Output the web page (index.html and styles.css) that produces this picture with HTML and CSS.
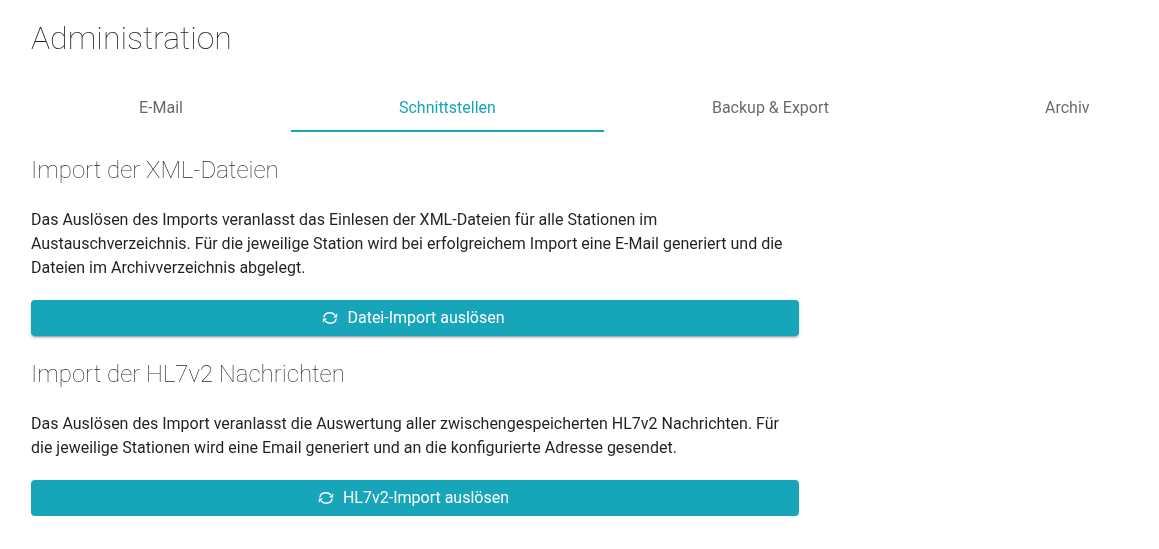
FILE: index.html
```html
<!DOCTYPE html>
<html lang="de">
<head>
    <meta charset="UTF-8">
    <title>Administration</title>
    <link rel="stylesheet" href="styles.css">
</head>
<body>

<div class="container">
    <h1 class="page-title">Administration</h1>

    <div class="tabs">
        <div class="tab">E-Mail</div>
        <div class="tab active">Schnittstellen</div>
        <div class="tab">Backup &amp; Export</div>
        <div class="tab">Archiv</div>
    </div>

    <div class="panel">
        <h2 class="section-title">Import der XML-Dateien</h2>
        <p class="section-text">Das Auslösen des Imports veranlasst das Einlesen der XML-Dateien für alle Stationen im Austauschverzeichnis. Für die jeweilige Station wird bei erfolgreichem Import eine E-Mail generiert und die Dateien im Archivverzeichnis abgelegt.</p>
        <button class="action-button raised">
            <svg class="sync-icon" viewBox="0 0 16 16"><path class="sync-arc" d="M1.8 7.4C2.3 4.6 4.8 2.8 8 2.8c2 0 3.6.8 4.8 2.2M14.2 8.6c-.5 2.8-3 4.6-6.2 4.6-2 0-3.6-.8-4.8-2.2"/><path d="M15.2 3.2v4.2H11zM.8 12.8V8.6H5z"/></svg>
            <span>Datei-Import auslösen</span>
        </button>

        <h2 class="section-title">Import der HL7v2 Nachrichten</h2>
        <p class="section-text">Das Auslösen des Import veranlasst die Auswertung aller zwischengespeicherten HL7v2 Nachrichten. Für die jeweilige Stationen wird eine Email generiert und an die konfigurierte Adresse gesendet.</p>
        <button class="action-button">
            <svg class="sync-icon" viewBox="0 0 16 16"><path class="sync-arc" d="M1.8 7.4C2.3 4.6 4.8 2.8 8 2.8c2 0 3.6.8 4.8 2.2M14.2 8.6c-.5 2.8-3 4.6-6.2 4.6-2 0-3.6-.8-4.8-2.2"/><path d="M15.2 3.2v4.2H11zM.8 12.8V8.6H5z"/></svg>
            <span>HL7v2-Import auslösen</span>
        </button>
    </div>
</div>

</body>
</html>
```

FILE: styles.css
```css
* {
    box-sizing: border-box;
    margin: 0;
    padding: 0;
}

html, body {
    overflow: hidden;
}

body {
    background-color: #FFFFFF;
    font-family: 'Roboto', sans-serif;
    color: rgba(0, 0, 0, 0.87);
    text-rendering: optimizeLegibility;
}

.container {
    padding: 17px 0 0 31px;
    will-change: transform;
}

.page-title {
    font-weight: 100;
    font-size: 32px;
    line-height: 43px;
    color: rgba(0, 0, 0, 0.87);
    margin-bottom: 24px;
}

.tabs {
    display: flex;
    width: max-content;
}

.tab {
    padding: 0 108px;
    font-size: 16px;
    height: 48px;
    line-height: 48px;
    color: rgba(0, 0, 0, 0.6);
}

.tab.active {
    color: #17A5BA;
    border-bottom: 2px solid #17A5BA;
}

.panel {
    width: 768px;
}

.section-title {
    font-weight: 100;
    font-size: 24px;
    line-height: 32px;
    color: rgba(0, 0, 0, 0.87);
    margin-top: 22px;
    margin-bottom: 22px;
}

.section-text {
    font-size: 16px;
    line-height: 24px;
    margin-bottom: 20px;
}

.action-button {
    display: flex;
    justify-content: center;
    align-items: center;
    gap: 9px;
    width: 100%;
    height: 36px;
    padding: 0 3px 2px 0;
    background-color: #17A5BA;
    color: #FFFFFF;
    border: none;
    border-radius: 4px;
    font-family: inherit;
    font-size: 16px;
}

.action-button.raised {
    box-shadow: 0 2px 2px 0 rgba(0, 0, 0, 0.14), 0 3px 1px -2px rgba(0, 0, 0, 0.2), 0 1px 5px 0 rgba(0, 0, 0, 0.12);
}

.sync-icon {
    width: 16px;
    height: 16px;
    margin-top: 2px;
    fill: #FFFFFF;
}

.sync-arc {
    fill: none;
    stroke: #FFFFFF;
    stroke-width: 1.4;
}
```
